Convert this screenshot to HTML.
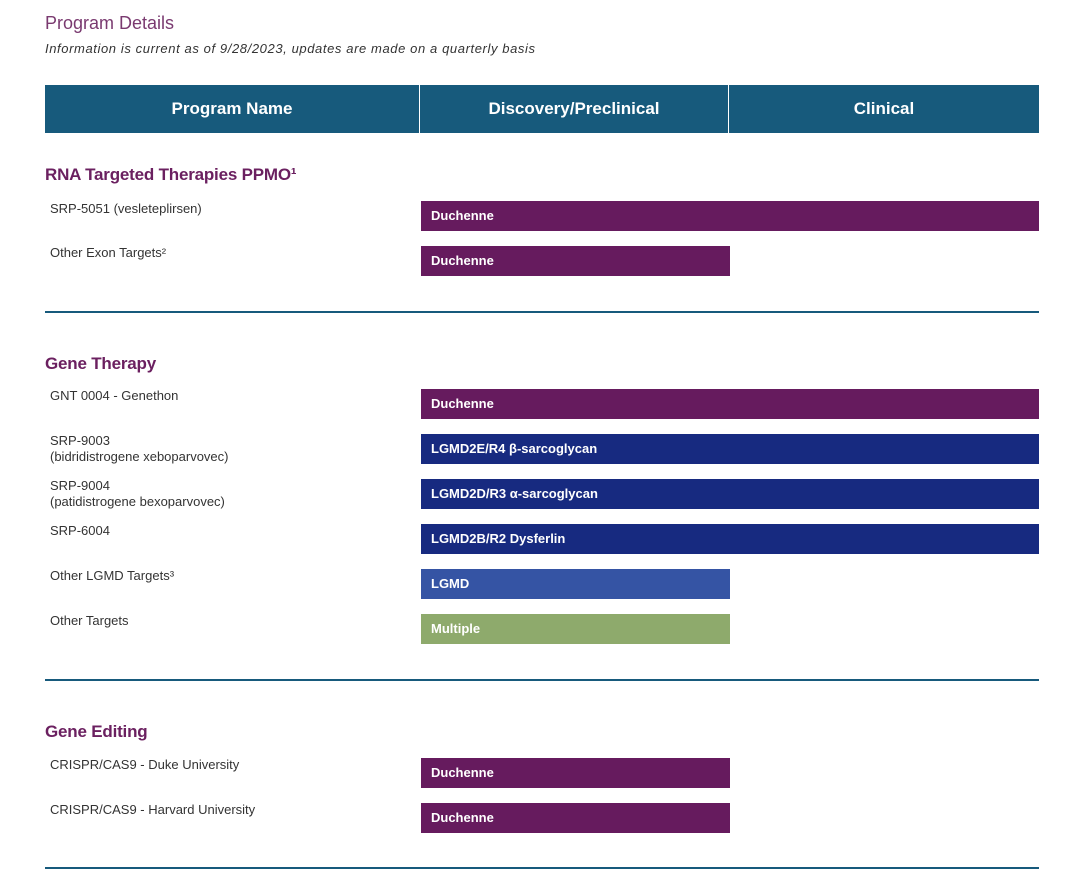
<!DOCTYPE html><html><head><style>
body{margin:0;width:1082px;height:880px;background:#fff;font-family:"Liberation Sans",sans-serif;position:relative;overflow:hidden}
.a{position:absolute}
.h1{left:45px;top:13px;font-size:18px;color:#7a3a70}
.sub{left:45px;top:41px;font-size:13px;letter-spacing:0.6px;font-style:italic;color:#333}
.hd{top:85px;height:48px;background:#175a7c;color:#fff;font-weight:bold;font-size:17px;line-height:48px;text-align:center}
.st{left:45px;font-size:17px;color:#6b2060;font-weight:bold;letter-spacing:-0.2px}
.lb{left:50px;font-size:13px;color:#333;line-height:16px}
.bar{height:30px;color:#fff;font-weight:bold;font-size:13px;line-height:30px;padding-left:10px;box-sizing:border-box;left:421px}
.p{background:#661b5e}.n{background:#172a80}.l{background:#3554a4}.g{background:#8eaa6c}
.w{width:618px}.s{width:309px}
.ln{left:45px;width:994px;height:2px;background:#175a7c}
</style></head><body>
<div class="a h1">Program Details</div>
<div class="a sub">Information is current as of 9/28/2023, updates are made on a quarterly basis</div>
<div class="a hd" style="left:45px;width:374px">Program Name</div>
<div class="a hd" style="left:420px;width:308px">Discovery/Preclinical</div>
<div class="a hd" style="left:729px;width:310px">Clinical</div>

<div class="a st" style="top:165px">RNA Targeted Therapies PPMO¹</div>
<div class="a lb" style="top:201px">SRP-5051 (vesleteplirsen)</div>
<div class="a bar p w" style="top:201px">Duchenne</div>
<div class="a lb" style="top:245px">Other Exon Targets²</div>
<div class="a bar p s" style="top:246px">Duchenne</div>
<div class="a ln" style="top:311px"></div>

<div class="a st" style="top:354px">Gene Therapy</div>
<div class="a lb" style="top:388px">GNT 0004 - Genethon</div>
<div class="a bar p w" style="top:389px">Duchenne</div>
<div class="a lb" style="top:433px">SRP-9003<br>(bidridistrogene xeboparvovec)</div>
<div class="a bar n w" style="top:434px">LGMD2E/R4 β-sarcoglycan</div>
<div class="a lb" style="top:478px">SRP-9004<br>(patidistrogene bexoparvovec)</div>
<div class="a bar n w" style="top:479px">LGMD2D/R3 α-sarcoglycan</div>
<div class="a lb" style="top:523px">SRP-6004</div>
<div class="a bar n w" style="top:524px">LGMD2B/R2 Dysferlin</div>
<div class="a lb" style="top:568px">Other LGMD Targets³</div>
<div class="a bar l s" style="top:569px">LGMD</div>
<div class="a lb" style="top:613px">Other Targets</div>
<div class="a bar g s" style="top:614px">Multiple</div>
<div class="a ln" style="top:679px"></div>

<div class="a st" style="top:722px">Gene Editing</div>
<div class="a lb" style="top:757px">CRISPR/CAS9 - Duke University</div>
<div class="a bar p s" style="top:758px">Duchenne</div>
<div class="a lb" style="top:802px">CRISPR/CAS9 - Harvard University</div>
<div class="a bar p s" style="top:803px">Duchenne</div>
<div class="a ln" style="top:867px"></div>
</body></html>
